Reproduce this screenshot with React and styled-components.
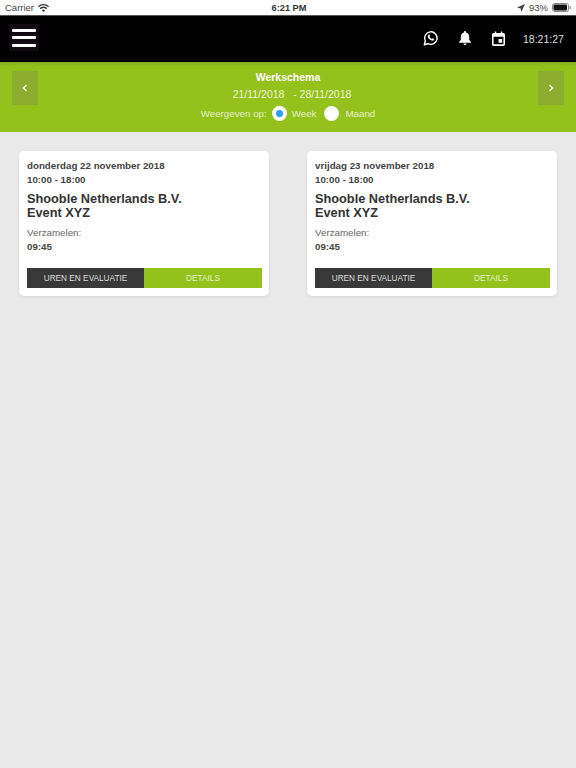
import React from "react";
import styled, { createGlobalStyle } from "styled-components";

const Global = createGlobalStyle`
  html, body { margin: 0; padding: 0; background: #e9e9e9; }
  body { font-family: "Liberation Sans", Arial, sans-serif; }
`;
const Page = styled.div`
  width: 576px; height: 768px; overflow: hidden; background: #e9e9e9;
  display: flex; flex-direction: column;
`;
const StatusBar = styled.div`
  height: 15px; background: #fff; color: #444; font-size: 9.5px;
  display: flex; align-items: center; justify-content: space-between;
  padding: 0 5px; position: relative; box-sizing: border-box;
`;
const StatusSide = styled.div`display: flex; align-items: center; gap: 4px;`;
const Clock = styled.div`
  position: absolute; left: 2px; right: 0; top: 0; height: 15px; line-height: 16px;
  text-align: center; font-weight: 700; font-size: 9.25px; color: #333;
`;
const TopBar = styled.header`
  height: 47px; background: #000; display: flex; align-items: center;
  padding: 0 0 0 9px; border-top: 1px solid #555; box-sizing: border-box;
`;
const MenuButton = styled.div`
  width: 30px; height: 27px; background: #120c12; display: flex; flex-direction: column;
  align-items: center; justify-content: center; gap: 4.500px; margin-top: -3px;
`;
const MenuLine = styled.span`width: 24px; height: 3px; border-radius: 1px; background: #fff;`;
const TopRight = styled.div`
  margin-left: auto; display: flex; align-items: center; color: #fff; margin-top: -2px;
`;
const IconSlot = styled.div`width: ${p => p.$w || 34}px; display: flex; justify-content: center;`;
const Time = styled.div`font-size: 10.5px; color: #ddd; margin-left: 8px; width: 46px; margin-right: 7px; margin-top: 2px;`;
const Band = styled.section`
  height: 70px; background: linear-gradient(#84ab1e 0, #94c11c 4px); display: flex;
  align-items: flex-start; justify-content: space-between; padding: 9px 12px 0; box-sizing: border-box;
  color: #fff;
`;
const NavButton = styled.div`
  width: 26px; height: 34px; background: #8cad30; display: flex;
  align-items: center; justify-content: center;
`;
const BandCenter = styled.div`
  display: flex; flex-direction: column; align-items: center; font-size: 10.5px;
`;
const BandTitle = styled.div`font-weight: 700; line-height: 12px;`;
const Dates = styled.div`line-height: 12px; margin-top: 5px; margin-left: 8px; color: #eef5d8; white-space: pre;`;
const Choice = styled.div`display: flex; align-items: center; margin-top: 6px; color: #e6f0c8; font-size: 9.75px;`;
const Radio = styled.span`
  width: 15px; height: 15px; border-radius: 50%; background: #fff; display: flex;
  align-items: center; justify-content: center; margin: 0 ${p => p.$gap}px 0 5px;
`;
const RadioDot = styled.span`width: 7px; height: 7px; border-radius: 50%; background: #2e9bf0;`;
const ChoiceLabel = styled.span`margin-right: ${p => p.$gap || 0}px;`;
const Cards = styled.main`
  display: flex; gap: 38px; padding: 19px 19px 0;
`;
const Card = styled.article`
  width: 250px; height: 145px; background: #fff; border-radius: 5px;
  box-sizing: border-box; padding: 8px 7px 8px 8px; color: #444;
  box-shadow: 0 1px 3px rgba(0,0,0,.08); display: flex; flex-direction: column;
`;
const Meta = styled.div`font-size: 9.75px; font-weight: 700; line-height: 14px;`;
const Name = styled.h2`
  margin: 5px 0 0; font-size: 12.75px; line-height: 13.500px; font-weight: 700; color: #333;
`;
const Label = styled.div`font-size: 9.75px; color: #666; line-height: 14px; margin-top: 7px;`;
const Actions = styled.div`display: grid; grid-template-columns: 117px 118px; margin-top: auto; height: 20px;`;
const Action = styled.div`
  background: ${p => p.$bg}; color: ${p => p.$fg}; font-size: 8.25px;
  display: flex; align-items: center; justify-content: center;
`;

const Job = ({ date }) => (
  <Card>
    <Meta>{date}</Meta>
    <Meta>10:00 - 18:00</Meta>
    <Name>Shooble Netherlands B.V.<br />Event XYZ</Name>
    <Label>Verzamelen:</Label>
    <Meta>09:45</Meta>
    <Actions>
      <Action $bg="#393939" $fg="#ddd">UREN EN EVALUATIE</Action>
      <Action $bg="#94c11c" $fg="#e6f0c8">DETAILS</Action>
    </Actions>
  </Card>
);

export default function App() {
  return (
    <Page>
      <Global />
      <StatusBar>
        <StatusSide>
          <span>Carrier</span>
          <svg width="11" height="8" viewBox="0 0 11 8"><path d="M5.500 8 3.800 6.200a2.500 2.500 0 0 1 3.400 0zM2.800 5.200 1.600 4a5.600 5.600 0 0 1 7.800 0L8.200 5.200a4 4 0 0 0-5.400 0zM.8 3.200 0 2.300a7.800 7.800 0 0 1 11 0l-.8.900a6.600 6.600 0 0 0-9.400 0z" fill="#333" /></svg>
        </StatusSide>
        <Clock>6:21 PM</Clock>
        <StatusSide>
          <svg width="8" height="8" viewBox="0 0 8 8"><path d="M8 0 0 3.600l3.600.8.800 3.600z" fill="#444" /></svg>
          <span>93%</span>
          <svg width="19" height="9" viewBox="0 0 19 9"><rect x=".5" y=".5" width="16" height="8" rx="2" fill="none" stroke="#888" /><rect x="1.500" y="1.500" width="13.500" height="6" rx="1" fill="#111" /><rect x="17.500" y="3" width="1.200" height="3" fill="#888" /></svg>
        </StatusSide>
      </StatusBar>
      <TopBar>
        <MenuButton><MenuLine /><MenuLine /><MenuLine /></MenuButton>
        <TopRight>
          <IconSlot>
            <svg width="16" height="16" viewBox="0 0 16 16"><path d="M1.300 14.700 2.300 11A6.300 6.300 0 1 1 5 13.700z" fill="none" stroke="#fff" strokeWidth="1.400" strokeLinejoin="round" /><path d="M5.400 4.800c.5-.5 1-.4 1.200 0l.5 1.200-.6.800c.5 1 1.300 1.700 2.400 2.200l.8-.7 1.300.6c.3.3.2.900-.1 1.200-.7.700-1.900.7-3.200 0C6.300 9.300 5.300 8.200 4.900 7c-.3-.9 0-1.700.5-2.200z" fill="#fff" /></svg>
          </IconSlot>
          <IconSlot>
            <svg width="14" height="16" viewBox="0 0 14 16"><path d="M7 1c.6 0 1 .4 1 1v.4c2 .5 3.200 2.200 3.200 4.300V10l1.800 2v.8H1V12l1.800-2V6.700C2.800 4.600 4 2.900 6 2.400V2c0-.6.4-1 1-1zM5.500 13.500h3a1.500 1.500 0 0 1-3 0z" fill="#fff" /></svg>
          </IconSlot>
          <IconSlot $w={33}>
            <svg width="13" height="15" viewBox="0 0 14 16"><path d="M3 .5h1.500V2h5V.5H11V2h1.200C13.200 2 14 2.800 14 3.800v10.400c0 1-.8 1.800-1.800 1.800H1.800C.8 16 0 15.200 0 14.200V3.800C0 2.800.8 2 1.800 2H3zM1.700 6v8.300h10.600V6zM7 8.500h4v4H7z" fill="#fff" fillRule="evenodd" /></svg>
          </IconSlot>
          <Time>18:21:27</Time>
        </TopRight>
      </TopBar>
      <Band>
        <NavButton>
          <svg width="6" height="8" viewBox="0 0 6 8"><path d="M4.500 1 1.500 4l3 3" fill="none" stroke="#fff" strokeWidth="1.300" /></svg>
        </NavButton>
        <BandCenter>
          <BandTitle>Werkschema</BandTitle>
          <Dates>21/11/2018   - 28/11/2018</Dates>
          <Choice>
            <span>Weergeven op:</span>
            <Radio $gap={5}><RadioDot /></Radio>
            <ChoiceLabel $gap={3}>Week</ChoiceLabel>
            <Radio $gap={6} />
            <ChoiceLabel>Maand</ChoiceLabel>
          </Choice>
        </BandCenter>
        <NavButton>
          <svg width="6" height="8" viewBox="0 0 6 8"><path d="M1.500 1l3 3-3 3" fill="none" stroke="#fff" strokeWidth="1.300" /></svg>
        </NavButton>
      </Band>
      <Cards>
        <Job date="donderdag 22 november 2018" />
        <Job date="vrijdag 23 november 2018" />
      </Cards>
    </Page>
  );
}
